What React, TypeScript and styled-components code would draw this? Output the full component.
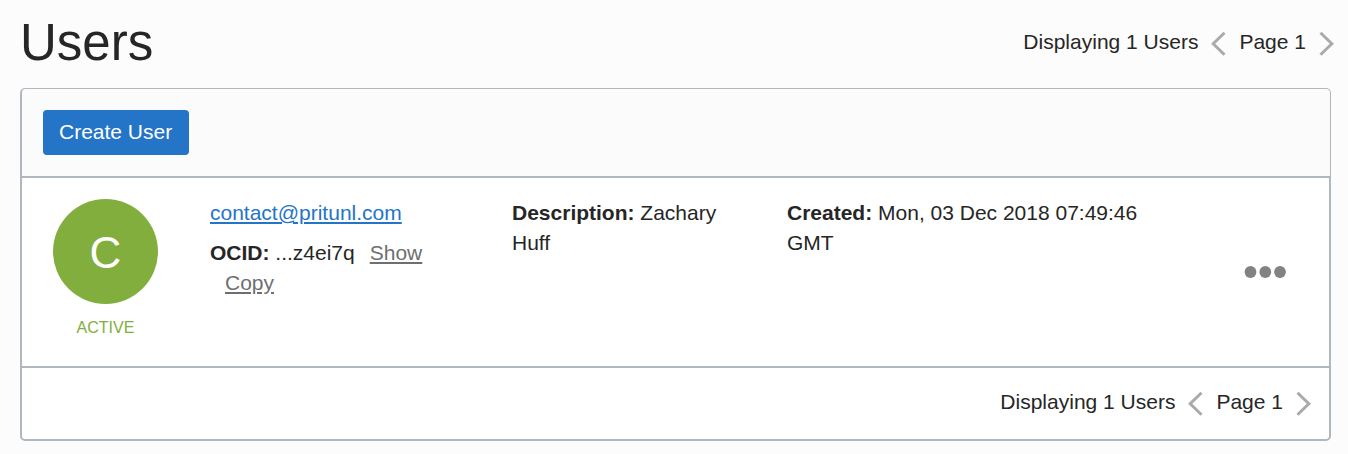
import React from 'react';
import styled, { createGlobalStyle } from 'styled-components';

const GlobalStyle = createGlobalStyle`
  * { box-sizing: border-box; }
  body {
    margin: 0;
    background: #fcfcfc;
    color: #262626;
    font: 21px/30px "Liberation Sans", Arial, sans-serif;
  }
`;

const Header = styled.header`
  display: flex;
  align-items: flex-start;
  justify-content: space-between;
  height: 88px;
  padding: 13px 14px 0 20px;
`;

const Title = styled.h1`
  margin: 0;
  font-size: 51px;
  line-height: 60px;
  font-weight: 400;
`;

const Pager = styled.nav`
  display: flex;
  align-items: center;
  gap: 13px;
  white-space: nowrap;
`;

const HeaderPager = styled.div`
  padding-top: 14px;
`;

const PagerButton = styled.button`
  display: flex;
  margin: 3px 0 0;
  padding: 0;
  border: 0;
  background: none;
  color: #aaa;
  cursor: pointer;
`;

const Panel = styled.main`
  margin: 0 17px 13px 20px;
  background: #fff;
  border-radius: 5px;
`;

const Toolbar = styled.div`
  padding: 21px;
  border: solid #b1b7be;
  border-width: 1px 1px 0 2px;
  border-radius: 5px 5px 0 0;
  background: #fbfbfb;
`;

const CreateButton = styled.button`
  display: block;
  height: 45px;
  padding: 0 17px 2px 16px;
  border: 0;
  border-radius: 4px;
  background: #2474c8;
  color: #fff;
  font: inherit;
  cursor: pointer;
`;

const PanelBody = styled.div`
  border: 2px solid #b1b7be;
  border-radius: 0 0 5px 5px;
`;

const UserRow = styled.article`
  display: flex;
  min-height: 190px;
  padding: 20px 42px 20px 31px;
  border-bottom: 2px solid #b1b7be;
`;

const Identity = styled.div`
  flex: none;
  width: 105px;
  margin: 1px 52px 0 0;
  text-align: center;
`;

const Avatar = styled.div`
  height: 105px;
  border-radius: 50%;
  background: #82ae3e;
  color: #fff;
  font-size: 44px;
  line-height: 108px;
`;

const Status = styled.div`
  margin-top: 9px;
  color: #82ae3e;
  font-size: 16px;
`;

const Details = styled.div`
  flex: 1;
  display: grid;
  grid-template-columns: 272fr 245fr 373fr;
  gap: 30px;
`;

const Line = styled.p`
  margin: 0 0 10px;
`;

const Link = styled.a<{ $muted?: boolean }>`
  display: inline-block;
  margin-left: ${(p) => (p.$muted ? 15 : 0)}px;
  color: ${(p) => (p.$muted ? '#6f6f6f' : '#2474c8')};
  text-decoration: underline;
`;

const MenuButton = styled.button`
  align-self: center;
  display: flex;
  margin-left: 84px;
  padding: 0;
  border: 0;
  background: none;
  color: #828282;
  cursor: pointer;
`;

const Footer = styled.footer`
  display: flex;
  justify-content: flex-end;
  padding: 19px 18px 22px;
`;

const Chevron = ({ d }: { d: string }) => (
  <svg width="15" height="26" viewBox="0 0 15 26" fill="none" stroke="currentColor" strokeWidth="3" aria-hidden="true">
    <path d={d} />
  </svg>
);

const Pagination = () => (
  <Pager aria-label="Pagination">
    <span>Displaying 1 Users</span>
    <PagerButton type="button" aria-label="Previous page">
      <Chevron d="M13.5 1.7 2.2 12.7l11.3 11" />
    </PagerButton>
    <span>Page 1</span>
    <PagerButton type="button" aria-label="Next page">
      <Chevron d="M1.5 1.7 12.8 12.7 1.5 23.7" />
    </PagerButton>
  </Pager>
);

export default function App() {
  return (
    <>
      <GlobalStyle />
      <Header>
        <Title>Users</Title>
        <HeaderPager><Pagination /></HeaderPager>
      </Header>
      <Panel>
        <Toolbar>
          <CreateButton type="button">Create User</CreateButton>
        </Toolbar>
        <PanelBody>
          <UserRow>
            <Identity>
              <Avatar>C</Avatar>
              <Status>ACTIVE</Status>
            </Identity>
            <Details>
              <div>
                <Line><Link href="#user">contact@pritunl.com</Link></Line>
                <Line>
                  <b>OCID:</b> ...z4ei7q<Link href="#show" $muted>Show</Link>
                  <Link href="#copy" $muted>Copy</Link>
                </Line>
              </div>
              <Line><b>Description:</b> Zachary Huff</Line>
              <Line><b>Created:</b> Mon, 03 Dec 2018 07:49:46 GMT</Line>
            </Details>
            <MenuButton type="button" aria-label="User actions">
              <svg width="43" height="14" viewBox="0 0 43 14" fill="currentColor" aria-hidden="true">
                <circle cx="6.5" cy="7" r="5.9" />
                <circle cx="21.3" cy="7" r="5.9" />
                <circle cx="36" cy="7" r="5.9" />
              </svg>
            </MenuButton>
          </UserRow>
          <Footer><Pagination /></Footer>
        </PanelBody>
      </Panel>
    </>
  );
}
